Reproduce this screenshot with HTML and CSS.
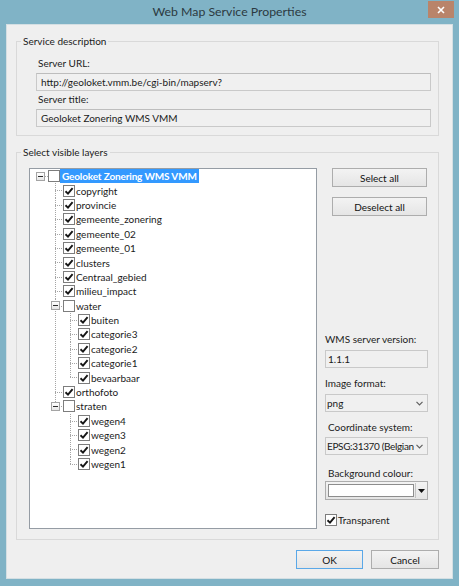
FILE: index.html
```html
<!DOCTYPE html>
<html>
<head>
<meta charset="utf-8">
<title>Web Map Service Properties</title>
<link rel="stylesheet" href="styles.css">
</head>
<body>
<div class="window">
  <div class="titlebar">
    <span class="title">Web Map Service Properties</span>
    <span class="close"><svg width="8" height="8" viewBox="0 0 8 8"><path d="M1 1L7 7M7 1L1 7" stroke="#fff" stroke-width="1.6"/></svg></span>
  </div>
  <div class="client">
    <section class="group">
      <div class="legend">Service description</div>
      <div class="desc">
        <div class="label">Server URL:</div>
        <div class="textbox">http://geoloket.vmm.be/cgi-bin/mapserv?</div>
        <div class="label">Server title:</div>
        <div class="textbox">Geoloket Zonering WMS VMM</div>
      </div>
    </section>
    <section class="group g2">
      <div class="legend">Select visible layers</div>
      <div class="layers">
        <div class="tree">
          <ul>
            <li>
              <div class="row lv0"><span class="gutter"><span class="exp"></span></span><span class="cb"></span><span class="txt sel">Geoloket Zonering WMS VMM</span></div>
              <ul class="l1">
                <li><div class="row lv1"><span class="gutter"></span><span class="cb on"><svg viewBox="0 0 10 10"><path d="M1.5 5.2L4 7.6L8.6 2.2"/></svg></span><span class="txt">copyright</span></div></li>
                <li><div class="row lv1"><span class="gutter"></span><span class="cb on"><svg viewBox="0 0 10 10"><path d="M1.5 5.2L4 7.6L8.6 2.2"/></svg></span><span class="txt">provincie</span></div></li>
                <li><div class="row lv1"><span class="gutter"></span><span class="cb on"><svg viewBox="0 0 10 10"><path d="M1.5 5.2L4 7.6L8.6 2.2"/></svg></span><span class="txt">gemeente_zonering</span></div></li>
                <li><div class="row lv1"><span class="gutter"></span><span class="cb on"><svg viewBox="0 0 10 10"><path d="M1.5 5.2L4 7.6L8.6 2.2"/></svg></span><span class="txt">gemeente_02</span></div></li>
                <li><div class="row lv1"><span class="gutter"></span><span class="cb on"><svg viewBox="0 0 10 10"><path d="M1.5 5.2L4 7.6L8.6 2.2"/></svg></span><span class="txt">gemeente_01</span></div></li>
                <li><div class="row lv1"><span class="gutter"></span><span class="cb on"><svg viewBox="0 0 10 10"><path d="M1.5 5.2L4 7.6L8.6 2.2"/></svg></span><span class="txt">clusters</span></div></li>
                <li><div class="row lv1"><span class="gutter"></span><span class="cb on"><svg viewBox="0 0 10 10"><path d="M1.5 5.2L4 7.6L8.6 2.2"/></svg></span><span class="txt">Centraal_gebied</span></div></li>
                <li><div class="row lv1"><span class="gutter"></span><span class="cb on"><svg viewBox="0 0 10 10"><path d="M1.5 5.2L4 7.6L8.6 2.2"/></svg></span><span class="txt">milieu_impact</span></div></li>
                <li>
                  <div class="row lv1"><span class="gutter"><span class="exp"></span></span><span class="cb"></span><span class="txt">water</span></div>
                  <ul class="l2">
                    <li><div class="row lv2"><span class="gutter"></span><span class="cb on"><svg viewBox="0 0 10 10"><path d="M1.5 5.2L4 7.6L8.6 2.2"/></svg></span><span class="txt">buiten</span></div></li>
                    <li><div class="row lv2"><span class="gutter"></span><span class="cb on"><svg viewBox="0 0 10 10"><path d="M1.5 5.2L4 7.6L8.6 2.2"/></svg></span><span class="txt">categorie3</span></div></li>
                    <li><div class="row lv2"><span class="gutter"></span><span class="cb on"><svg viewBox="0 0 10 10"><path d="M1.5 5.2L4 7.6L8.6 2.2"/></svg></span><span class="txt">categorie2</span></div></li>
                    <li><div class="row lv2"><span class="gutter"></span><span class="cb on"><svg viewBox="0 0 10 10"><path d="M1.5 5.2L4 7.6L8.6 2.2"/></svg></span><span class="txt">categorie1</span></div></li>
                    <li><div class="row lv2"><span class="gutter"></span><span class="cb on"><svg viewBox="0 0 10 10"><path d="M1.5 5.2L4 7.6L8.6 2.2"/></svg></span><span class="txt">bevaarbaar</span></div></li>
                  </ul>
                </li>
                <li><div class="row lv1"><span class="gutter"></span><span class="cb on"><svg viewBox="0 0 10 10"><path d="M1.5 5.2L4 7.6L8.6 2.2"/></svg></span><span class="txt">orthofoto</span></div></li>
                <li>
                  <div class="row lv1"><span class="gutter"><span class="exp"></span></span><span class="cb"></span><span class="txt">straten</span></div>
                  <ul class="l2">
                    <li><div class="row lv2"><span class="gutter"></span><span class="cb on"><svg viewBox="0 0 10 10"><path d="M1.5 5.2L4 7.6L8.6 2.2"/></svg></span><span class="txt">wegen4</span></div></li>
                    <li><div class="row lv2"><span class="gutter"></span><span class="cb on"><svg viewBox="0 0 10 10"><path d="M1.5 5.2L4 7.6L8.6 2.2"/></svg></span><span class="txt">wegen3</span></div></li>
                    <li><div class="row lv2"><span class="gutter"></span><span class="cb on"><svg viewBox="0 0 10 10"><path d="M1.5 5.2L4 7.6L8.6 2.2"/></svg></span><span class="txt">wegen2</span></div></li>
                    <li><div class="row lv2"><span class="gutter"></span><span class="cb on"><svg viewBox="0 0 10 10"><path d="M1.5 5.2L4 7.6L8.6 2.2"/></svg></span><span class="txt">wegen1</span></div></li>
                  </ul>
                </li>
              </ul>
            </li>
          </ul>
        </div>
        <div class="side">
          <div class="side-top">
            <button class="btn side-btn">Select all</button>
            <button class="btn side-btn">Deselect all</button>
          </div>
          <div class="side-bottom">
            <div class="slabel">WMS server version:</div>
            <div class="sbox version">1.1.1</div>
            <div class="slabel m8">Image format:</div>
            <div class="sbox combo fmt"><span class="ctext">png</span><svg class="chev" width="7" height="5" viewBox="0 0 7 5"><path d="M0.5 0.8L3.5 3.8L6.5 0.8" fill="none" stroke="#606060" stroke-width="1.2"/></svg></div>
            <div class="slabel m8 ind">Coordinate system:</div>
            <div class="sbox combo crs"><span class="ctext tight">EPSG:31370 (Belgian</span><svg class="chev" width="7" height="5" viewBox="0 0 7 5"><path d="M0.5 0.8L3.5 3.8L6.5 0.8" fill="none" stroke="#606060" stroke-width="1.2"/></svg></div>
            <div class="slabel m11 ind">Background colour:</div>
            <div class="picker"><span class="swatch"></span><span class="sep"></span><svg class="tri" width="7" height="4" viewBox="0 0 7 4"><path d="M0 0H7L3.5 4Z" fill="#111"/></svg></div>
            <div class="check-row"><span class="cb on"><svg viewBox="0 0 10 10"><path d="M1.5 5.2L4 7.6L8.6 2.2"/></svg></span><span class="txt">Transparent</span></div>
          </div>
        </div>
      </div>
    </section>
    <div class="actions">
      <button class="btn ok">OK</button>
      <button class="btn cancel">Cancel</button>
    </div>
  </div>
</div>
</body>
</html>
```
FILE: styles.css
```css
* { box-sizing: border-box; }
body {
  margin: 0;
  font-family: Lato, "Open Sans", "Noto Sans", sans-serif;
  font-size: 10px;
  color: #1b1b1b;
}
.window {
  width: 459px;
  height: 586px;
  background: #80b3c6;
  display: flex;
  flex-direction: column;
}
.titlebar {
  height: 24px;
  flex: none;
  display: grid;
  grid-template-columns: 1fr auto 1fr;
  align-items: start;
}
.title {
  grid-column: 2;
  font-size: 12.3px;
  line-height: 24px;
  color: #2c3a41;
}
.close {
  grid-column: 3;
  justify-self: end;
  margin: 1px 5px 0 0;
  width: 26px;
  height: 17px;
  background: #b9846a;
  display: flex;
  align-items: center;
  justify-content: center;
}
.client {
  flex: 1;
  min-height: 0;
  margin: 0 6px 7px;
  background: #efefef;
  border: 1px solid #d4dfe3;
  padding: 16px 13px 0 9px;
  display: flex;
  flex-direction: column;
}
.group {
  flex: none;
  border: 1px solid #d9d9d9;
}
.legend {
  width: fit-content;
  margin: -8px 0 0 4px;
  padding: 0 2px;
  line-height: 14px;
  background: #efefef;
}
.g2 { margin-top: 16px; }
.desc { padding: 8px 7px 7px 19px; }
.label { line-height: 15px; padding-left: 2px; }
.textbox {
  height: 18px;
  margin: 2px 0 1px;
  padding: 0 4px;
  border: 1px solid #c9c9c9;
  border-top-color: #bdbdbd;
  background: #f0f0f0;
  line-height: 16px;
  white-space: nowrap;
}
.layers {
  display: flex;
  gap: 8px;
  padding: 9px 10px 10px 12px;
}
.tree {
  width: 288px;
  height: 361px;
  flex: none;
  background: #fff;
  border: 1px solid #959ca4;
  overflow: hidden;
}
.tree ul { list-style: none; margin: 0; padding: 0; }
.row {
  display: flex;
  align-items: center;
  height: 14.4px;
}
.row.lv1 { padding-left: 15px; }
.row.lv2 { padding-left: 30px; }
.gutter {
  flex: none;
  width: 18px;
  height: 100%;
  display: flex;
  align-items: center;
  background: repeating-linear-gradient(to right, #a5a5a5 0 1px, transparent 1px 2px) 10px 7px / 8px 1px no-repeat;
}
.lv0 .gutter { background-position: 15px 7px; background-size: 3px 1px; }
.exp {
  width: 9px;
  height: 9px;
  margin-left: 6px;
  border: 1px solid #a4a4a4;
  background: linear-gradient(#ffffff, #e6e6e6);
  display: flex;
  align-items: center;
  justify-content: center;
}
.exp::before {
  content: "";
  width: 5px;
  height: 1px;
  background: #2b2b2b;
}
.l1 > li {
  background: repeating-linear-gradient(to bottom, #a5a5a5 0 1px, transparent 1px 2px) 25px 0 / 1px 100% no-repeat;
}
.l2 > li {
  background: repeating-linear-gradient(to bottom, #a5a5a5 0 1px, transparent 1px 2px) 40px 0 / 1px 100% no-repeat;
}
.l1 > li:last-child, .l2 > li:last-child { background-size: 1px 7px; }
.cb {
  flex: none;
  width: 12px;
  height: 12px;
  border: 1px solid #7d7d7d;
  background: #fff;
  display: flex;
  align-items: center;
  justify-content: center;
}
.cb svg { width: 10px; height: 10px; }
.cb svg path { fill: none; stroke: #161616; stroke-width: 1.9; }
.txt {
  padding: 0 2px 0 1px;
  line-height: 14px;
  white-space: nowrap;
}
.txt.sel {
  background: #3399ff;
  color: #fff;
  font-weight: bold;
  letter-spacing: -0.15px;
  padding: 0 2px;
}
.side {
  width: 103px;
  flex: none;
  display: flex;
  flex-direction: column;
  justify-content: space-between;
}
.side-top { display: flex; flex-direction: column; gap: 10px; }
.btn {
  font: inherit;
  color: #111;
  height: 19px;
  padding: 0;
  border: 1px solid #adadad;
  background: linear-gradient(#f3f3f3, #e5e5e5);
}
.side-btn { width: 95px; margin-left: 7px; }
.side-bottom { padding-bottom: 2px; }
.slabel { line-height: 15px; }
.slabel.ind { padding-left: 3px; }
.m8 { margin-top: 8px; }
.m11 { margin-top: 11px; }
.sbox {
  height: 18px;
  margin-top: 3px;
  border: 1px solid #c9c9c9;
  background: #f0f0f0;
  line-height: 16px;
  padding-left: 2px;
  white-space: nowrap;
}
.combo {
  display: flex;
  align-items: center;
  padding: 0 4px 0 1px;
}
.combo.crs { margin-top: 2px; }
.ctext { flex: 1; overflow: hidden; white-space: nowrap; }
.ctext.tight { letter-spacing: -0.35px; }
.chev { flex: none; margin-left: 2px; }
.picker {
  height: 19px;
  border: 1px solid #adadad;
  background: linear-gradient(#f3f3f3, #e5e5e5);
  display: flex;
  align-items: center;
  padding-left: 2px;
}
.swatch {
  width: 86px;
  height: 13px;
  background: #fff;
  border: 1px solid #8d8d8d;
}
.sep {
  width: 1px;
  height: 15px;
  margin-left: 1px;
  background: #c4c4c4;
}
.tri { margin-left: 2px; }
.check-row {
  margin-top: 12px;
  height: 15px;
  display: flex;
  align-items: center;
}
.check-row .txt { padding-left: 1px; }
.actions {
  flex: none;
  display: flex;
  justify-content: flex-end;
  gap: 8px;
  margin-top: 10px;
}
.ok { width: 67px; border-color: #5aa8e8; }
.cancel { width: 68px; }
```
